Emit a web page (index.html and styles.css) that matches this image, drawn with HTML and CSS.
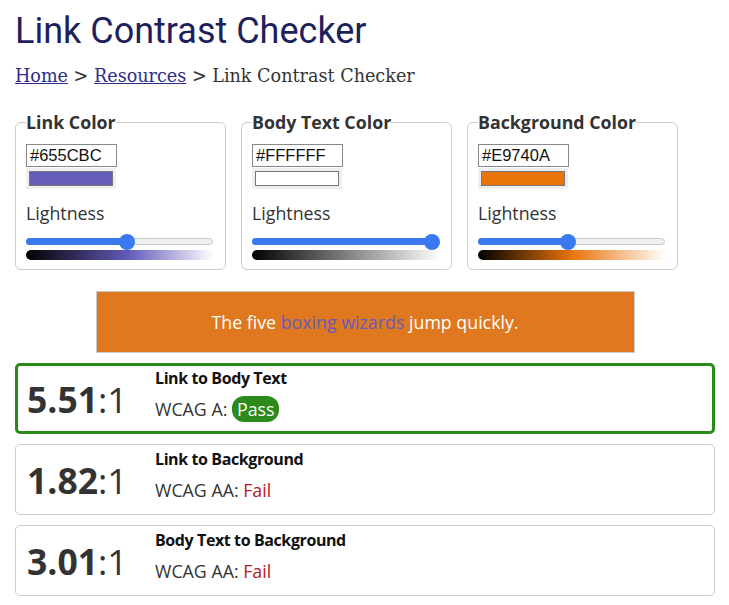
FILE: index.html
```html
<!DOCTYPE html>
<html>
<head>
<meta charset="utf-8">
<link rel="stylesheet" href="styles.css">
</head>
<body>
<h1 class="title">Link Contrast Checker</h1>
<nav class="crumbs"><a href="#">Home</a> &gt; <a href="#">Resources</a> &gt; Link Contrast Checker</nav>

<div class="pickers">
  <fieldset class="picker">
    <legend>Link Color</legend>
    <div class="hex">#655CBC</div>
    <div class="swatch"><span class="chip chip-link"></span></div>
    <div class="light">Lightness</div>
    <div class="slider"><div class="fill" style="width:54%"></div><div class="thumb" style="left:54%"></div></div>
    <div class="grad grad-link"></div>
  </fieldset>
  <fieldset class="picker">
    <legend>Body Text Color</legend>
    <div class="hex">#FFFFFF</div>
    <div class="swatch"><span class="chip chip-body"></span></div>
    <div class="light">Lightness</div>
    <div class="slider"><div class="fill" style="width:97%"></div><div class="thumb" style="left:97%"></div></div>
    <div class="grad grad-body"></div>
  </fieldset>
  <fieldset class="picker">
    <legend>Background Color</legend>
    <div class="hex">#E9740A</div>
    <div class="swatch"><span class="chip chip-bg"></span></div>
    <div class="light">Lightness</div>
    <div class="slider"><div class="fill" style="width:48%"></div><div class="thumb" style="left:48%"></div></div>
    <div class="grad grad-bg"></div>
  </fieldset>
</div>

<div class="preview"><p class="sample">The five <span class="plink">boxing wizards</span> jump quickly.</p></div>

<div class="result pass-card">
  <div class="ratio"><b>5.51</b>:1</div>
  <div class="info">
    <div class="label">Link to Body Text</div>
    <div class="wcag">WCAG A: <span class="pass">Pass</span></div>
  </div>
</div>
<div class="result">
  <div class="ratio"><b>1.82</b>:1</div>
  <div class="info">
    <div class="label">Link to Background</div>
    <div class="wcag">WCAG AA: <span class="fail">Fail</span></div>
  </div>
</div>
<div class="result">
  <div class="ratio"><b>3.01</b>:1</div>
  <div class="info">
    <div class="label">Body Text to Background</div>
    <div class="wcag">WCAG AA: <span class="fail">Fail</span></div>
  </div>
</div>
</body>
</html>
```

FILE: styles.css
```css
body {
  margin: 0;
  padding: 0 14px 0 15px;
  font-family: "Open Sans", sans-serif;
  color: #333;
  background: #fff;
}
.title {
  font-family: Roboto, sans-serif;
  font-weight: 400;
  font-size: 36px;
  color: #1e1f5c;
  margin: 11px 0 0 0;
  line-height: 40px;
}
.crumbs {
  font-family: "DejaVu Serif", serif;
  font-size: 17.6px;
  color: #333;
  margin-top: 14px;
  line-height: 22px;
}
.crumbs a { color: #2c2c8a; }
.pickers {
  display: flex;
  gap: 15px;
  margin-top: 23px;
}
.picker {
  width: 211px;
  box-sizing: border-box;
  border: 1px solid #ccc;
  border-radius: 6px;
  margin: 0;
  padding: 0 10px 10px 10px;
  height: 160px;
}
.picker legend {
  font-weight: 700;
  font-size: 17.8px;
  padding: 0;
  color: #333;
  line-height: 24px;
}
.hex {
  width: 91px;
  height: 23px;
  box-sizing: border-box;
  border: 1px solid #888;
  font-family: "Liberation Sans", sans-serif;
  font-size: 16.5px;
  color: #111;
  padding-left: 3px;
  line-height: 21px;
  margin-top: 10px;
}
.swatch {
  width: 90px;
  height: 21px;
  background: #efefef;
  padding: 3px;
  box-sizing: border-box;
  margin-top: 1px;
}
.chip {
  display: block;
  height: 100%;
  border: 1px solid #777;
  box-sizing: border-box;
}
.chip-link { background: #655CBC; }
.chip-body { background: #fff; }
.chip-bg { background: #E9740A; }
.light {
  font-size: 17.8px;
  margin-top: 12px;
  line-height: 24px;
}
.slider {
  position: relative;
  height: 7px;
  background: #efefef;
  border: 1px solid #c8c8c8;
  border-radius: 5px;
  margin-top: 13px;
  width: 187px;
  box-sizing: border-box;
}
.fill {
  position: absolute;
  left: -1px; top: -1px; bottom: -1px;
  background: #3a78ef;
  border-radius: 5px;
}
.thumb {
  position: absolute;
  top: 50%;
  width: 16px;
  height: 16px;
  margin: -8px 0 0 -8px;
  border-radius: 50%;
  background: #3a78ef;
}
.grad {
  height: 10px;
  margin-top: 5px;
  border-radius: 5px 0 0 5px;
  width: 188px;
}
.grad-link { background: linear-gradient(to right, #000, #655CBC 55%, #fff); }
.grad-body { background: linear-gradient(to right, #000, #fff); }
.grad-bg { background: linear-gradient(to right, #000, #E9740A 50%, #fff); }
.preview {
  margin: 21px auto 0;
  width: 539px;
  height: 62px;
  box-sizing: border-box;
  border: 1px solid #ccc;
  background: #E07820;
  color: #fff;
  display: flex;
  align-items: center;
  justify-content: center;
}
.sample {
  margin: 0;
  font-size: 17.8px;
}
.plink { color: #655CBC; }
.result {
  display: flex;
  align-items: center;
  border: 1px solid #ccc;
  border-radius: 5px;
  height: 71px;
  box-sizing: border-box;
  margin-top: 10px;
  padding-left: 11px;
}
.pass-card {
  border: 3px solid #2a8a1a;
  margin-top: 10px;
  padding-left: 9px;
}
.ratio {
  font-size: 35.5px;
  width: 128px;
  color: #333;
  line-height: 40px;
}
.ratio b { font-weight: 700; }
.info { margin-top: -10px; }
.label {
  font-weight: 700;
  font-size: 16px;
  color: #111;
  letter-spacing: -0.4px;
  line-height: 22px;
}
.wcag {
  font-size: 17.8px;
  margin-top: 8px;
  line-height: 24px;
}
.pass {
  background: #2a8a1a;
  color: #fff;
  padding: 1px 5px;
  border-radius: 12px;
}
.fail { color: #b22222; }
```
